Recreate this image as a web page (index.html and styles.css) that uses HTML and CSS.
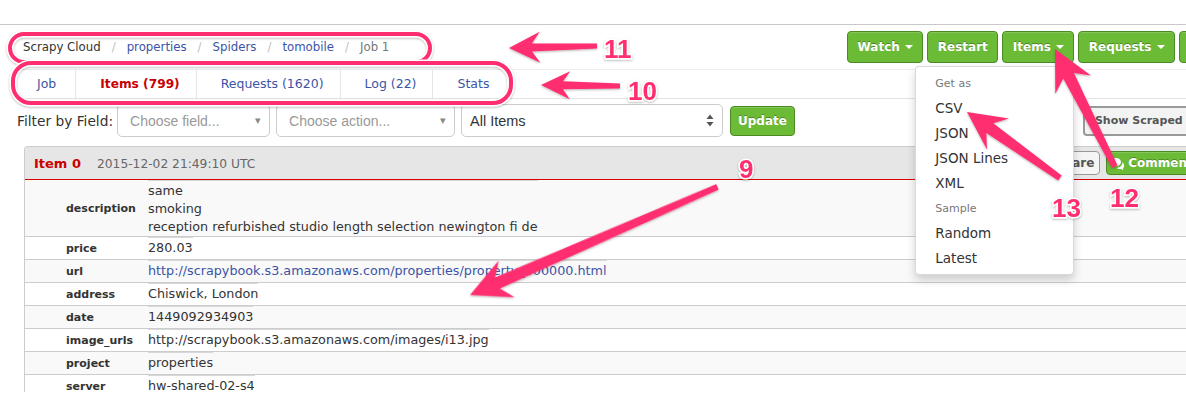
FILE: index.html
```html
<!DOCTYPE html>
<html>
<head>
<meta charset="utf-8">
<title>Scrapy Cloud - Job 1</title>
<link rel="stylesheet" href="styles.css">
</head>
<body>
<div class="page">
  <div class="topbar"></div>

  <div class="header-row">
    <div class="crumbs">
      <span class="crumb-root">Scrapy Cloud</span><span class="sep">/</span><a class="crumb">properties</a><span class="sep">/</span><a class="crumb">Spiders</a><span class="sep">/</span><a class="crumb">tomobile</a><span class="sep">/</span><span class="crumb-current">Job 1</span>
    </div>
    <div class="actions">
      <button class="btn-green">Watch<span class="caret"></span></button>
      <button class="btn-green">Restart</button>
      <div class="dropdown">
        <button class="btn-green">Items<span class="caret"></span></button>
        <ul class="menu">
          <li class="menu-header">Get as</li>
          <li class="menu-item">CSV</li>
          <li class="menu-item">JSON</li>
          <li class="menu-item">JSON Lines</li>
          <li class="menu-item">XML</li>
          <li class="menu-header">Sample</li>
          <li class="menu-item">Random</li>
          <li class="menu-item">Latest</li>
        </ul>
      </div>
      <button class="btn-green">Requests<span class="caret"></span></button>
      <button class="btn-green">Log<span class="caret"></span></button>
    </div>
  </div>

  <nav class="tabs">
    <a class="tab">Job</a>
    <a class="tab active">Items (799)</a>
    <a class="tab">Requests (1620)</a>
    <a class="tab">Log (22)</a>
    <a class="tab">Stats</a>
  </nav>

  <div class="filter-row">
    <span class="filter-label">Filter by Field:</span>
    <div class="chosen w1"><span>Choose field...</span><span class="chosen-arrow">&#9662;</span></div>
    <div class="chosen w2"><span>Choose action...</span><span class="chosen-arrow">&#9662;</span></div>
    <div class="native-select"><span>All Items</span>
      <svg class="updown" width="8" height="13" viewBox="0 0 8 13"><path d="M4 0.5 L7.5 5 L0.5 5 Z M4 12.5 L7.5 8 L0.5 8 Z" fill="#555"/></svg>
    </div>
    <button class="btn-green btn-update">Update</button>
    <button class="btn-show">Show Scraped Items</button>
  </div>

  <div class="panel">
    <div class="panel-head">
      <div class="item-title">
        <span class="item-name">Item 0</span>
        <span class="item-time">2015-12-02 21:49:10 UTC</span>
      </div>
      <div class="item-actions">
        <button class="btn-light">Compare</button>
        <button class="btn-green btn-comment">
          <svg class="comment-icon" width="15" height="13" viewBox="0 0 15 13"><path d="M6 1C3.2 1 1 2.8 1 5c0 1.2.6 2.2 1.7 3L2 10.3l2.7-1.5c.4.1.9.2 1.3.2 2.8 0 5-1.8 5-4S8.8 1 6 1z" fill="#fff"/><path d="M12.2 5.2c.1.3.1.6.1.9 0 2.5-2.4 4.6-5.5 4.9.8.7 2 1.1 3.2 1.1.4 0 .8 0 1.2-.1l2.2 1.2-.6-1.9c.9-.6 1.4-1.5 1.4-2.5 0-1.5-.8-2.8-2-3.6z" fill="#fff"/></svg>Comment</button>
      </div>
    </div>
    <table class="fields">
      <colgroup><col class="c-label"><col></colgroup>
      <tr><td class="lbl">description</td><td class="val"><div class="v multi">same<br>smoking<br>reception refurbished studio length selection newington fi de</div></td></tr>
      <tr><td class="lbl">price</td><td class="val"><div class="v">280.03</div></td></tr>
      <tr><td class="lbl">url</td><td class="val"><div class="v"><a class="link">http://scrapybook.s3.amazonaws.com/properties/property_000000.html</a></div></td></tr>
      <tr><td class="lbl">address</td><td class="val"><div class="v">Chiswick, London</div></td></tr>
      <tr><td class="lbl">date</td><td class="val"><div class="v">1449092934903</div></td></tr>
      <tr><td class="lbl">image_urls</td><td class="val"><div class="v">http://scrapybook.s3.amazonaws.com/images/i13.jpg</div></td></tr>
      <tr><td class="lbl">project</td><td class="val"><div class="v">properties</div></td></tr>
      <tr><td class="lbl">server</td><td class="val"><div class="v">hw-shared-02-s4</div></td></tr>
    </table>
  </div>
</div>

<svg class="annotations" width="1186" height="413" viewBox="0 0 1186 413">
  <defs>
    <filter id="sh" x="-10%" y="-10%" width="120%" height="130%">
      <feDropShadow dx="0" dy="1" stdDeviation="1" flood-color="#000" flood-opacity="0.3"/>
    </filter>
  </defs>
  <g filter="url(#sh)">
    <rect x="10" y="34" width="420" height="28" rx="14" class="ring-halo"/>
    <rect x="10" y="34" width="420" height="28" rx="14" class="ring"/>
    <rect x="13" y="63" width="498" height="40" rx="18" class="ring-halo"/>
    <rect x="13" y="63" width="498" height="40" rx="18" class="ring"/>
  </g>
  <g class="arrows" filter="url(#sh)">
    <polygon transform="translate(509 48) rotate(178.7)" points="0,0 -31,-15.5 -23,-4 -88,-2.5 -88,2.5 -23,4 -31,15.5"/>
    <polygon transform="translate(541 85) rotate(180.7)" points="0,0 -29,-14 -22,-4 -79,-2.5 -79,2.5 -22,4 -29,14"/>
    <polygon transform="translate(470 295) rotate(156.4)" points="0,0 -40,-20 -30,-6 -270,-3 -270,3 -30,6 -40,20"/>
    <polygon transform="translate(1055 49) rotate(-116.95)" points="0,0 -40,-20 -30,-6 -132,-3 -132,3 -30,6 -40,20"/>
    <polygon transform="translate(967 112) rotate(-144.6)" points="0,0 -38,-19 -28,-6 -114,-3 -114,3 -28,6 -38,19"/>
  </g>
  <g filter="url(#sh)">
    <text x="604" y="58" class="num">11</text>
    <text x="628" y="100" class="num">10</text>
    <text x="739" y="178" class="num">9</text>
    <text x="1052" y="217" class="num">13</text>
    <text x="1110" y="207" class="num">12</text>
  </g>
</svg>
</body>
</html>
```
FILE: styles.css
```css
* { box-sizing: border-box; }
html, body { margin: 0; padding: 0; }
body {
  width: 1186px;
  height: 413px;
  overflow: hidden;
  position: relative;
  background: #fff;
  font-family: "DejaVu Sans", sans-serif;
  color: #333;
}
.page { width: 1400px; }

.topbar { height: 25px; border-bottom: 1px solid #c8c8c8; }

/* header: breadcrumb + action buttons */
.header-row {
  display: flex;
  align-items: center;
  margin-top: 6px;
  padding-left: 17px;
  height: 32px;
}
.crumbs {
  width: 830px;
  flex: none;
  font-size: 11.75px;
  padding-left: 6px;
  display: flex;
  align-items: center;
}
.crumb-root { color: #333; }
.crumb { color: #3c54a6; text-decoration: none; }
.sep { color: #c0c0c0; padding: 0 11px; }
.crumb-current { color: #777; }

.actions { display: flex; gap: 4px; flex: none; }

.btn-green {
  height: 32px;
  padding: 0 9.5px;
  background: #6cbb37;
  border: 1px solid #4a8a22;
  border-radius: 4px;
  color: #fff;
  font: bold 12px "DejaVu Sans", sans-serif;
  text-shadow: 0 -1px 0 rgba(0,0,0,.3);
  display: inline-flex;
  align-items: center;
  box-shadow: inset 0 1px 0 rgba(255,255,255,.18);
  white-space: nowrap;
}
.caret {
  display: inline-block;
  width: 0; height: 0;
  margin-left: 5px;
  border-top: 4px solid #fff;
  border-left: 4px solid transparent;
  border-right: 4px solid transparent;
}

.dropdown { position: relative; }
.menu {
  position: absolute;
  right: 0;
  top: 35px;
  width: 159px;
  margin: 0;
  padding: 4px 0 3px;
  list-style: none;
  background: #fff;
  border: 1px solid rgba(0,0,0,.15);
  border-radius: 4px;
  box-shadow: 0 5px 10px rgba(0,0,0,.18);
  z-index: 5;
}
.menu li { line-height: 25px; padding-left: 19px; white-space: nowrap; }
.menu-header { font-size: 11px; color: #777; }
.menu-item { font-size: 13.5px; color: #333; }

/* tabs */
.tabs {
  display: flex;
  margin: 6px 0 0 17px;
  height: 30px;
  border-top: 1px solid #eee;
  border-bottom: 1px solid #e3e3e3;
}
.tab {
  line-height: 28px;
  font-size: 12.5px;
  color: #3c54a6;
  padding: 0 16px 0 24px;
  border-left: 1px solid #e6e6e6;
  white-space: nowrap;
}
.tab:first-child { padding: 0 19px 0 20px; border-left: 0; }
.tab.active { color: #c80000; font-weight: bold; font-size: 12.2px; }

/* filter row */
.filter-row {
  display: flex;
  align-items: center;
  margin: 5px 0 0 17px;
  height: 33px;
}
.filter-label { font-size: 13.75px; color: #333; margin-right: 4px; white-space: nowrap; }
.chosen, .native-select {
  height: 33px;
  margin-right: 6px;
  border: 1px solid #ccc;
  border-radius: 5px;
  background: #fff;
  display: flex;
  align-items: center;
  justify-content: space-between;
  padding: 0 8px 0 12px;
  font: 14px "Liberation Sans", Arial, sans-serif;
  color: #999;
}
.chosen.w1 { width: 153px; }
.chosen.w2 { width: 179px; }
.chosen-arrow { font-size: 11px; color: #888; }
.native-select { width: 262px; margin-right: 0; color: #333; padding-left: 8px; font-size: 14.5px; }
.btn-update { height: 30px; margin-left: 7px; padding: 0 7px; }
.btn-show {
  margin-left: 288px;
  height: 30px;
  padding: 0 10px;
  border: 2px solid #999;
  border-radius: 4px;
  background: #f3f3f3;
  color: #555;
  font: bold 11px "DejaVu Sans", sans-serif;
  white-space: nowrap;
}

/* item panel */
.panel {
  margin: 9px 0 0 24px;
  height: 246px;
  overflow: hidden;
  border: 1px solid #ccc;
  border-right: 0;
  border-bottom: 0;
  border-radius: 4px 0 0 0;
}
.panel-head {
  height: 33px;
  background: #e6e6e6;
  border-bottom: 1px solid #d90000;
  display: flex;
  align-items: center;
}
.item-title {
  width: 1003px;
  flex: none;
  padding-left: 9px;
  display: flex;
  align-items: baseline;
}
.item-name { color: #cc0000; font-weight: bold; font-size: 13px; }
.item-time { color: #666; font-size: 12.25px; margin-left: 16px; }
.item-actions { display: flex; gap: 6px; flex: none; }
.btn-light {
  height: 24px;
  padding: 0 5px;
  border: 1px solid #999;
  border-radius: 4px;
  background: #f5f5f5;
  color: #555;
  font: bold 12px "DejaVu Sans", sans-serif;
}
.btn-comment { height: 24px; padding: 0 8px 0 3px; }
.comment-icon { margin-right: 3px; }

.fields {
  width: 100%;
  border-collapse: collapse;
  table-layout: fixed;
  font-size: 12.75px;
}
.c-label { width: 117px; }
.fields tr { border-bottom: 1px solid #ccc; }
.fields tr:nth-child(odd) { background: #f9f9f9; }
.lbl {
  padding: 0 0 0 41px;
  font-weight: bold;
  font-size: 11px;
  color: #333;
  vertical-align: middle;
  white-space: nowrap;
}
.val { padding: 0 6px; vertical-align: top; }
.v {
  display: inline-block;
  border-top: 1px solid #d8d8d8;
  padding: 1px 0 2px;
  line-height: 18px;
  color: #333;
  white-space: nowrap;
}
.v.multi { padding-bottom: 0; }
.link { color: #3c54a6; text-decoration: none; }

/* annotation overlay */
.annotations {
  position: absolute;
  left: 0;
  top: 0;
  pointer-events: none;
  z-index: 10;
}
.ring { fill: none; stroke: #ff2f6f; stroke-width: 4; }
.ring-halo { fill: none; stroke: #fff; stroke-width: 7; }
.arrows polygon { fill: #ff2f6f; }
.num {
  font: bold 26px "Liberation Sans", Arial, sans-serif;
  fill: #ff2f6f;
  stroke: #fff;
  stroke-width: 3px;
  paint-order: stroke;
}
```
